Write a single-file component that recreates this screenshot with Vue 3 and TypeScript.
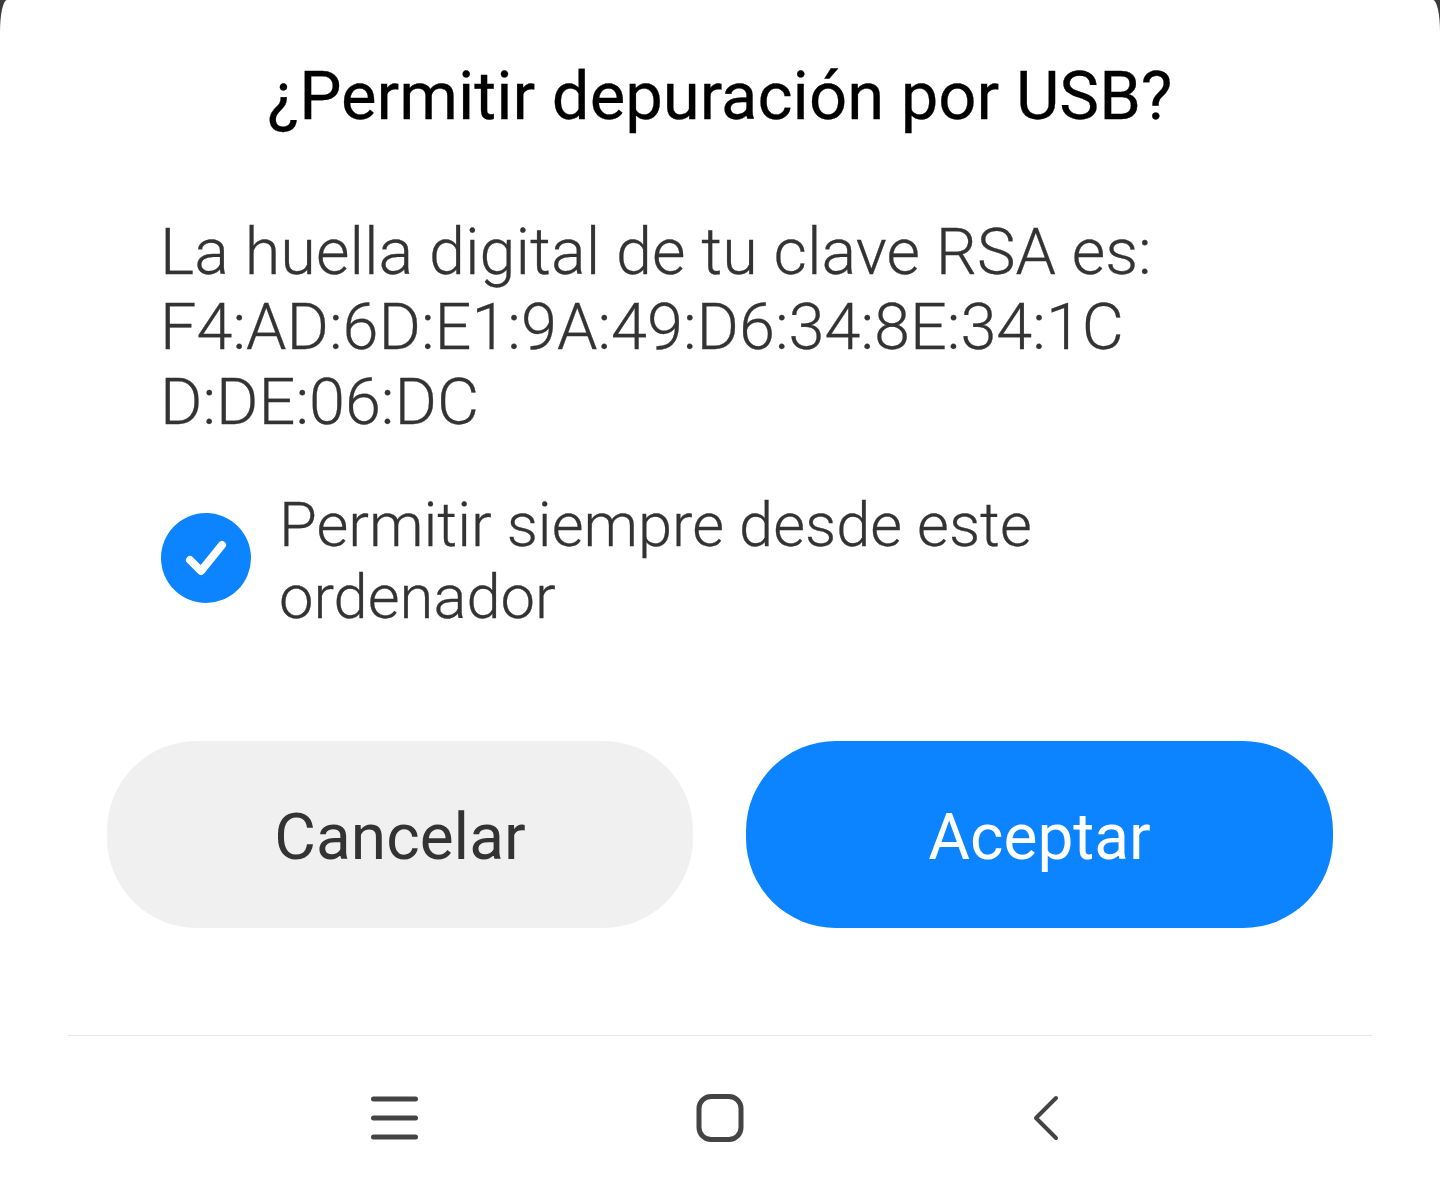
<template>
  <div class="screen">
    <section class="sheet">
      <h1 class="title">¿Permitir depuración por USB?</h1>
      <p class="message">
        La huella digital de tu clave RSA es:<br />
        F4:AD:6D:E1:9A:49:D6:34:8E:34:1C<br />
        D:DE:06:DC
      </p>
      <label class="remember">
        <span class="check">
          <svg width="90" height="90" viewBox="0 0 90 90">
            <circle cx="45" cy="45" r="45" fill="#0d84ff" />
            <path d="M29 47 L40 58 L61 32" fill="none" stroke="#fff" stroke-width="8" stroke-linecap="round" stroke-linejoin="round" />
          </svg>
        </span>
        <span class="remember-text">Permitir siempre desde este<br />ordenador</span>
      </label>
      <div class="actions">
        <button class="btn btn-cancel">Cancelar</button>
        <button class="btn btn-ok">Aceptar</button>
      </div>
      <nav class="navbar">
        <svg width="48" height="44" viewBox="0 0 48 44">
          <path v-for="y in menuLines" :key="y" :d="`M2.5 ${y} H44.5`" stroke="#444" stroke-width="5" stroke-linecap="round" />
        </svg>
        <svg width="48" height="50" viewBox="0 0 48 50">
          <rect x="3" y="3.5" width="42" height="43" rx="12" fill="none" stroke="#444" stroke-width="5" />
        </svg>
        <svg width="28" height="48" viewBox="0 0 28 48">
          <path d="M25 4 L5 24 L25 44" fill="none" stroke="#444" stroke-width="4" stroke-linecap="round" stroke-linejoin="round" />
        </svg>
      </nav>
    </section>
  </div>
</template>

<script setup lang="ts">
  const menuLines: number[] = [3, 22, 41]
</script>

<style>
  html,
  body {
    margin: 0;
    background: #fff;
  }
</style>

<style scoped>
  .screen {
    width: 1440px;
    height: 1200px;
    overflow: hidden;
    background: #3a3a3a;
    font-family: Roboto, 'Liberation Sans', sans-serif;
  }

  .sheet {
    display: flex;
    flex-direction: column;
    height: 1200px;
    box-sizing: border-box;
    background: #fff;
    border-radius: 7px 7px 0 0 / 32px 32px 0 0;
  }

  .title {
    margin: 0;
    padding-top: 59px;
    font-size: 67px;
    font-weight: 400;
    line-height: 74px;
    color: #000;
    text-align: center;
    -webkit-text-stroke: 0.3px #000;
  }

  .message {
    margin: 82px 0 0;
    padding-left: 160px;
    font-size: 64.8px;
    font-weight: 300;
    line-height: 75px;
    color: #333;
    -webkit-text-stroke: 0.3px #333;
  }

  .remember {
    display: flex;
    gap: 28px;
    align-items: center;
    margin-top: 49px;
    padding-left: 161px;
  }

  .check {
    display: flex;
    flex-shrink: 0;
    margin-bottom: 6px;
  }

  .remember-text {
    font-size: 61.5px;
    font-weight: 300;
    line-height: 72px;
    color: #333;
    -webkit-text-stroke: 0.3px #333;
  }

  .actions {
    display: flex;
    gap: 53px;
    margin-top: 108px;
    padding-left: 107px;
  }

  .btn {
    width: 586px;
    height: 187px;
    padding: 5px 0 0;
    font-family: inherit;
    font-size: 64px;
    font-weight: 400;
    border: none;
    border-radius: 90px;
  }

  .btn-cancel {
    color: #333;
    background: #f0f0f0;
  }

  .btn-ok {
    width: 587px;
    color: #fff;
    background: #0d84ff;
  }

  .navbar {
    display: grid;
    grid-template-columns: repeat(3, 48px);
    justify-content: space-between;
    align-items: center;
    justify-items: center;
    height: 170px;
    box-sizing: border-box;
    margin: 107px 68px 0;
    padding: 0 303px;
    border-top: 1px solid #e6e6e6;
  }
</style>
